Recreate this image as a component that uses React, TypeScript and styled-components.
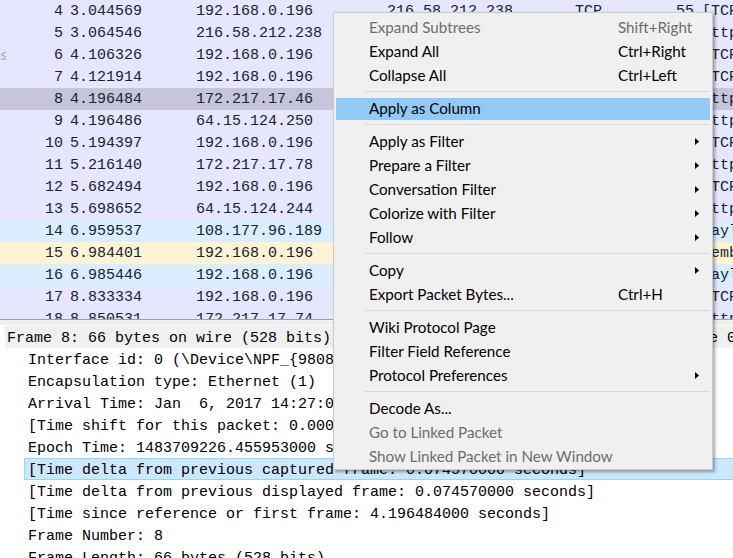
import styled, { createGlobalStyle } from "styled-components";

const GlobalStyle = createGlobalStyle`
  html, body {
    margin: 0;
    padding: 0;
    background: #ffffff;
    overflow: hidden;
  }
`;

type Kind = "tcp" | "udp" | "routing";

interface Packet {
  no: number;
  time: string;
  src: string;
  dst: string;
  proto: string;
  len: number;
  info: string;
  kind: Kind;
  related?: boolean;
}

const packets: Packet[] = [
  { no: 4, time: "3.044569", src: "192.168.0.196", dst: "216.58.212.238", proto: "TCP", len: 55, info: "[TCP Keep-Alive] 52103 > https [ACK] Seq=1 Ack=1 Win=256 Len=1", kind: "tcp" },
  { no: 5, time: "3.064546", src: "216.58.212.238", dst: "192.168.0.196", proto: "TCP", len: 66, info: "https > 52103 [ACK] Seq=1 Ack=2 Win=344 Len=0 SLE=1 SRE=2", kind: "tcp" },
  { no: 6, time: "4.106326", src: "192.168.0.196", dst: "172.217.17.46", proto: "TCP", len: 55, info: "[TCP Keep-Alive] 52110 > https [ACK] Seq=1 Ack=1 Win=255 Len=1", kind: "tcp", related: true },
  { no: 7, time: "4.121914", src: "192.168.0.196", dst: "64.15.124.250", proto: "TCP", len: 55, info: "[TCP Keep-Alive] 52118 > https [ACK] Seq=1 Ack=1 Win=256 Len=1", kind: "tcp" },
  { no: 8, time: "4.196484", src: "172.217.17.46", dst: "192.168.0.196", proto: "TCP", len: 66, info: "https > 52110 [ACK] Seq=1 Ack=2 Win=342 Len=0 SLE=1 SRE=2", kind: "tcp" },
  { no: 9, time: "4.196486", src: "64.15.124.250", dst: "192.168.0.196", proto: "TCP", len: 66, info: "https > 52118 [ACK] Seq=1 Ack=2 Win=123 Len=0 SLE=1 SRE=2", kind: "tcp" },
  { no: 10, time: "5.194397", src: "192.168.0.196", dst: "172.217.17.78", proto: "TCP", len: 55, info: "[TCP Keep-Alive] 52121 > https [ACK] Seq=1 Ack=1 Win=256 Len=1", kind: "tcp" },
  { no: 11, time: "5.216140", src: "172.217.17.78", dst: "192.168.0.196", proto: "TCP", len: 66, info: "https > 52121 [ACK] Seq=1 Ack=2 Win=342 Len=0 SLE=1 SRE=2", kind: "tcp" },
  { no: 12, time: "5.682494", src: "192.168.0.196", dst: "64.15.124.244", proto: "TCP", len: 55, info: "[TCP Keep-Alive] 52125 > https [ACK] Seq=1 Ack=1 Win=256 Len=1", kind: "tcp" },
  { no: 13, time: "5.698652", src: "64.15.124.244", dst: "192.168.0.196", proto: "TCP", len: 66, info: "https > 52125 [ACK] Seq=1 Ack=2 Win=123 Len=0 SLE=1 SRE=2", kind: "tcp" },
  { no: 14, time: "6.959537", src: "108.177.96.189", dst: "192.168.0.196", proto: "GQUIC", len: 81, info: "Payload (Encrypted), PKN: 12, CID: 1083920934", kind: "udp" },
  { no: 15, time: "6.984401", src: "192.168.0.196", dst: "224.0.0.22", proto: "IGMPv3", len: 54, info: "Membership Report / Join group 224.0.0.251", kind: "routing" },
  { no: 16, time: "6.985446", src: "192.168.0.196", dst: "108.177.96.189", proto: "GQUIC", len: 75, info: "Payload (Encrypted), PKN: 6, CID: 1083920934", kind: "udp" },
  { no: 17, time: "8.833334", src: "192.168.0.196", dst: "172.217.17.74", proto: "TCP", len: 55, info: "[TCP Keep-Alive] 52130 > https [ACK] Seq=1 Ack=1 Win=256 Len=1", kind: "tcp" },
  { no: 18, time: "8.850531", src: "172.217.17.74", dst: "192.168.0.196", proto: "TCP", len: 66, info: "https > 52130 [ACK] Seq=1 Ack=2 Win=342 Len=0 SLE=1 SRE=2", kind: "tcp" },
];

const selectedNo = 8;

const rowColors: Record<Kind, string> = {
  tcp: "#e7e6ff",
  udp: "#daeeff",
  routing: "#fff3d6",
};

interface DetailLine {
  text: string;
  level: number;
  selected?: boolean;
  header?: boolean;
}

const details: DetailLine[] = [
  { text: "Frame 8: 66 bytes on wire (528 bits), 66 bytes captured (528 bits) on interface 0", level: 0, header: true },
  { text: "Interface id: 0 (\\Device\\NPF_{98080B2F-6E4C-4D0A-9A55-31E1A6E04C0E})", level: 1 },
  { text: "Encapsulation type: Ethernet (1)", level: 1 },
  { text: "Arrival Time: Jan  6, 2017 14:27:06.455953000 W. Europe Standard Time", level: 1 },
  { text: "[Time shift for this packet: 0.000000000 seconds]", level: 1 },
  { text: "Epoch Time: 1483709226.455953000 seconds", level: 1 },
  { text: "[Time delta from previous captured frame: 0.074570000 seconds]", level: 1, selected: true },
  { text: "[Time delta from previous displayed frame: 0.074570000 seconds]", level: 1 },
  { text: "[Time since reference or first frame: 4.196484000 seconds]", level: 1 },
  { text: "Frame Number: 8", level: 1 },
  { text: "Frame Length: 66 bytes (528 bits)", level: 1 },
];

type MenuEntry =
  | { sep: true }
  | { sep?: false; label: string; shortcut?: string; submenu?: boolean; disabled?: boolean; active?: boolean };

const menu: MenuEntry[] = [
  { label: "Expand Subtrees", shortcut: "Shift+Right", disabled: true },
  { label: "Expand All", shortcut: "Ctrl+Right" },
  { label: "Collapse All", shortcut: "Ctrl+Left" },
  { sep: true },
  { label: "Apply as Column", active: true },
  { sep: true },
  { label: "Apply as Filter", submenu: true },
  { label: "Prepare a Filter", submenu: true },
  { label: "Conversation Filter", submenu: true },
  { label: "Colorize with Filter", submenu: true },
  { label: "Follow", submenu: true },
  { sep: true },
  { label: "Copy", submenu: true },
  { label: "Export Packet Bytes...", shortcut: "Ctrl+H" },
  { sep: true },
  { label: "Wiki Protocol Page" },
  { label: "Filter Field Reference" },
  { label: "Protocol Preferences", submenu: true },
  { sep: true },
  { label: "Decode As..." },
  { label: "Go to Linked Packet", disabled: true },
  { label: "Show Linked Packet in New Window", disabled: true },
];

function RelatedMark() {
  return (
    <svg width="7" height="9" viewBox="0 0 7 9">
      <path d="M6 1 L1 3.5 L6 6" fill="none" stroke="#9a9a9a" strokeWidth="1" />
      <path d="M1 8 L6 8" stroke="#9a9a9a" strokeWidth="1" />
    </svg>
  );
}

function SubmenuArrow() {
  return (
    <svg width="4" height="7" viewBox="0 0 4 7">
      <path d="M0 0 L4 3.5 L0 7 Z" fill="#000" />
    </svg>
  );
}

export default function App() {
  return (
    <Screen>
      <GlobalStyle />
      <PacketList>
        {packets.map((p) => (
          <PacketRow key={p.no} $bg={p.no === selectedNo ? "#c7c5da" : rowColors[p.kind]}>
            <Cell $w={8}>{p.related && <RelatedMark />}</Cell>
            <Cell $w={55} $align="right">{p.no}</Cell>
            <Cell $w={126} $gap={7}>{p.time}</Cell>
            <Cell $w={191}>{p.src}</Cell>
            <Cell $w={188}>{p.dst}</Cell>
            <Cell $w={80}>{p.proto}</Cell>
            <Cell $w={39} $align="right">{p.len}</Cell>
            <Cell $gap={8}>{p.info}</Cell>
          </PacketRow>
        ))}
      </PacketList>
      <Splitter />
      <DetailsPane>
        {details.map((d, i) => (
          <DetailRow key={i} $level={d.level} $selected={d.selected} $header={d.header}>
            {d.text}
          </DetailRow>
        ))}
      </DetailsPane>
      <ContextMenu>
        {menu.map((m, i) =>
          m.sep ? (
            <Separator key={i} />
          ) : (
            <MenuItem key={i} $active={m.active} $disabled={m.disabled}>
              <MenuLabel>{m.label}</MenuLabel>
              <Shortcut>{m.shortcut}</Shortcut>
              {m.submenu && <SubmenuArrow />}
            </MenuItem>
          )
        )}
      </ContextMenu>
    </Screen>
  );
}

const Screen = styled.div`
  position: relative;
  width: 733px;
  height: 558px;
  overflow: hidden;
  display: flex;
  flex-direction: column;
  background: #ffffff;
`;

const PacketList = styled.div`
  height: 319px;
  flex-shrink: 0;
  overflow: hidden;
  background: #e7e6ff;
  font-family: "Liberation Mono", monospace;
  font-size: 15px;
  color: #12272e;
`;

const PacketRow = styled.div<{ $bg: string }>`
  display: flex;
  align-items: center;
  height: 22px;
  background: ${(p) => p.$bg};
  white-space: pre;
`;

const Cell = styled.div<{ $w?: number; $align?: "left" | "right"; $gap?: number }>`
  flex: ${(p) => (p.$w ? `0 0 ${p.$w}px` : "1 0 auto")};
  margin-left: ${(p) => p.$gap ?? 0}px;
  text-align: ${(p) => p.$align ?? "left"};
  overflow: hidden;
  display: flex;
  justify-content: ${(p) => (p.$align === "right" ? "flex-end" : "flex-start")};
  align-items: center;
`;

const Splitter = styled.div`
  height: 5px;
  flex-shrink: 0;
  border-top: 1px solid #a0a0a0;
  background: #f0f0f0;
`;

const DetailsPane = styled.div`
  flex: 1;
  padding: 1px 0 0 5px;
  background: #ffffff;
  font-family: "Liberation Mono", monospace;
  font-size: 15px;
  color: #000000;
  overflow: hidden;
`;

const DetailRow = styled.div<{ $level: number; $selected?: boolean; $header?: boolean }>`
  height: 22px;
  box-sizing: border-box;
  padding-top: 4px;
  line-height: 16px;
  margin-left: ${(p) => p.$level * 19}px;
  padding-left: ${(p) => (p.$level ? 3 : 1)}px;
  border: 1px solid ${(p) => (p.$selected ? "#99d1ff" : "transparent")};
  border-right: none;
  background: ${(p) => (p.$selected ? "#cce8ff" : p.$header ? "#f0f0f0" : "transparent")};
  white-space: pre;
  overflow: hidden;
`;

const ContextMenu = styled.div`
  position: absolute;
  left: 333px;
  top: 12px;
  width: 380px;
  box-sizing: border-box;
  display: flex;
  flex-direction: column;
  padding: 3px 0 0 0;
  background: #f0f0f0;
  border: 1px solid #cccccc;
  box-shadow: 2px 2px 3px rgba(0, 0, 0, 0.35);
  font-family: Lato, "Liberation Sans", sans-serif;
  font-size: 15.2px;
`;

const MenuItem = styled.div<{ $active?: boolean; $disabled?: boolean }>`
  display: flex;
  align-items: center;
  height: 22px;
  box-sizing: border-box;
  margin: 1px 2px 1px 2px;
  padding: 0 11px 2px 33px;
  background: ${(p) => (p.$active ? "#91c9f7" : "transparent")};
  color: ${(p) => (p.$disabled ? "#6d6d6d" : "#000000")};
`;

const MenuLabel = styled.span`
  flex: 0 0 249px;
  white-space: nowrap;
`;

const Shortcut = styled.span`
  flex: 1;
  white-space: nowrap;
`;

const Separator = styled.div`
  height: 1px;
  margin: 3px 2px 5px 31px;
  background: #d7d7d7;
`;
